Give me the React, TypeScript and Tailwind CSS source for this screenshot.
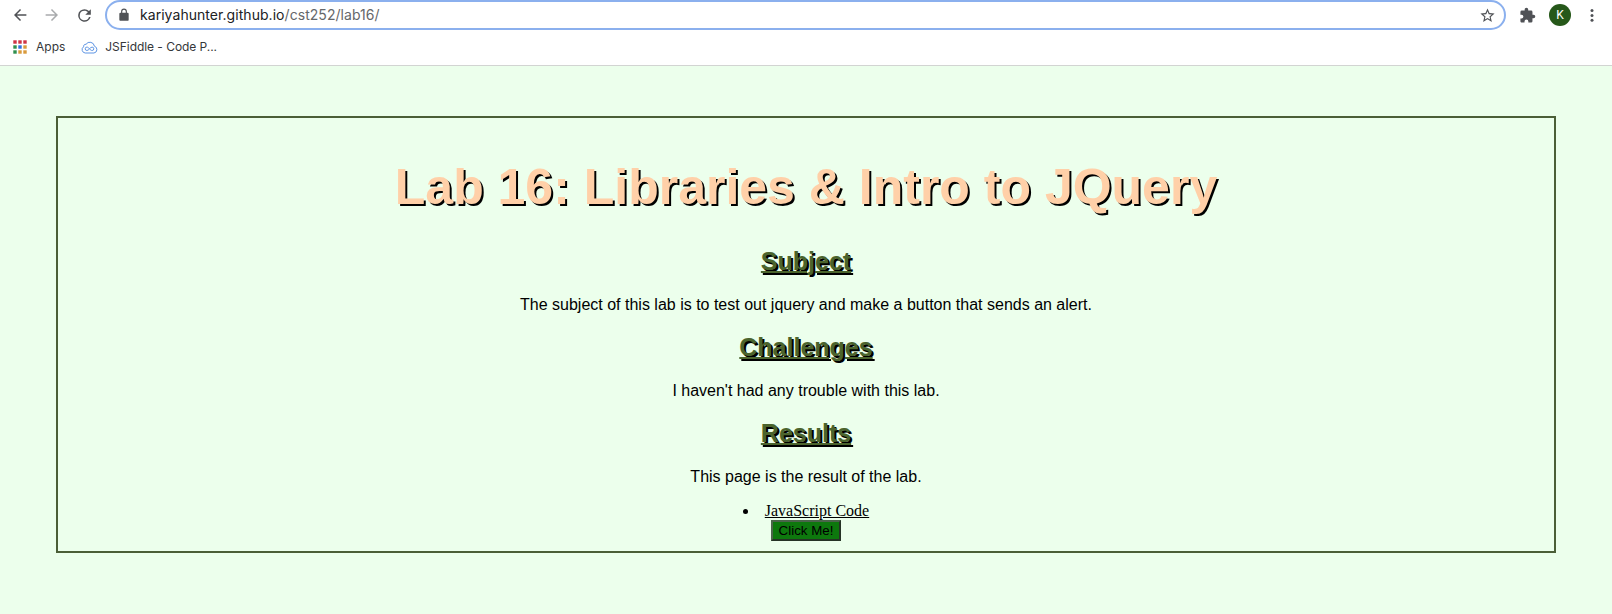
import React from "react";

const sections = [
  { title: "Subject", text: "The subject of this lab is to test out jquery and make a button that sends an alert." },
  { title: "Challenges", text: "I haven't had any trouble with this lab." },
  { title: "Results", text: "This page is the result of the lab." },
];

const appDots = [
  "fill-[#cf3344]", "fill-[#cf3344]", "fill-[#cf3344]",
  "fill-[#2f8f4e]", "fill-[#2f6fde]", "fill-[#d99a3c]",
  "fill-[#2f8f4e]", "fill-[#d99a3c]", "fill-[#d99a3c]",
];

function Toolbar() {
  return (
    <div className="flex h-[30px] items-center">
      <svg className="ml-[11px] size-[18px] shrink-0 fill-[#505256]" viewBox="0 0 24 24">
        <path d="M20.5 11H7.83l5.59-5.59L12 4l-8 8 8 8 1.41-1.41L7.83 13H20.5v-2z" />
      </svg>
      <svg className="ml-[14px] size-[18px] shrink-0 fill-[#a9abad]" viewBox="0 0 24 24">
        <path d="M12 4l-1.41 1.41L16.17 11H3.5v2h12.67l-5.58 5.59L12 20l8-8z" />
      </svg>
      <svg className="ml-[14px] size-[19px] shrink-0 fill-[#505256]" viewBox="0 0 24 24">
        <path d="M17.65 6.35A7.96 7.96 0 0 0 12 4a8 8 0 1 0 7.73 10h-2.08A6 6 0 1 1 12 6c1.66 0 3.14.69 4.22 1.78L13 11h7V4l-2.35 2.35z" />
      </svg>
      <div className="ml-[11px] flex h-[30px] w-[1401px] shrink-0 items-center rounded-full border-2 border-[#8bb0ee] bg-white">
        <svg className="ml-[10px] size-[14px] fill-[#505256]" viewBox="0 0 24 24">
          <path d="M18 8h-1V6A5 5 0 0 0 7 6v2H6a2 2 0 0 0-2 2v10c0 1.1.9 2 2 2h12a2 2 0 0 0 2-2V10a2 2 0 0 0-2-2zM9 6a3 3 0 0 1 6 0v2H9z" />
        </svg>
        <span className="ml-[9px] font-['Inter',sans-serif] text-[14px] leading-[20px] tracking-[0.05px] whitespace-nowrap text-[#202124]">
          kariyahunter.github.io<span className="text-[#65676a]">/cst252/lab16/</span>
        </span>
        <svg className="mr-[8px] ml-auto size-[17px] fill-[#505256]" viewBox="0 0 24 24">
          <path d="M22 9.24l-7.19-.62L12 2 9.19 8.63 2 9.24l5.46 4.73L5.82 21 12 17.27 18.18 21l-1.63-7.03L22 9.24zM12 15.4l-3.76 2.27 1-4.28-3.32-2.88 4.38-.38L12 6.1l1.71 4.04 4.38.38-3.32 2.88 1 4.28L12 15.4z" />
        </svg>
      </div>
      <svg className="ml-[13px] size-[17px] shrink-0 fill-[#505256]" viewBox="0 0 24 24">
        <path d="M20.5 11H19V7a2 2 0 0 0-2-2h-4V3.5a2.5 2.5 0 0 0-5 0V5H4a2 2 0 0 0-2 2v3.8h1.5a2.7 2.7 0 0 1 0 5.4H2V20c0 1.1.9 2 2 2h3.8v-1.5a2.7 2.7 0 0 1 5.4 0V22H17a2 2 0 0 0 2-2v-4h1.5a2.5 2.5 0 0 0 0-5z" />
      </svg>
      <div className="ml-[13px] flex size-[22px] shrink-0 items-center justify-center rounded-full bg-[#26581a] font-['Roboto',sans-serif] text-[12px] text-white">K</div>
      <svg className="ml-[12px] size-[18px] shrink-0 fill-[#505256]" viewBox="0 0 24 24">
        <circle cx="12" cy="6" r="2" />
        <circle cx="12" cy="12.5" r="2" />
        <circle cx="12" cy="19" r="2" />
      </svg>
    </div>
  );
}

function Bookmarks() {
  return (
    <div className="flex h-[34px] items-center font-['Inter',sans-serif] text-[12px] text-[#35373a]">
      <svg className="ml-[13px] size-[14px] shrink-0" viewBox="0 0 14 14">
        {appDots.map((color, i) => (
          <rect key={i} className={color} x={(i % 3) * 5 + 0.3} y={Math.floor(i / 3) * 5 + 0.3} width="3.4" height="3.4" />
        ))}
      </svg>
      <span className="ml-[9px]">Apps</span>
      <svg className="mt-px ml-[16px] h-[13px] w-[17px] shrink-0 fill-none stroke-[#5e95e4]" viewBox="0 0 17 13">
        <path d="M4.2 12A3.4 3.4 0 0 1 2.6 5.8 2.1 2.1 0 0 1 5 3.3 4.6 4.6 0 0 1 13.4 5.2 3.5 3.5 0 0 1 13 12z" />
        <path d="M8.5 7.8C7.5 6.6 6.8 6.1 5.9 6.1a1.7 1.7 0 0 0 0 3.4c1.9 0 3.3-3.4 5.2-3.4a1.7 1.7 0 0 1 0 3.4c-.9 0-1.6-.5-2.6-1.7z" />
      </svg>
      <span className="ml-[7px] tracking-[-0.05px]">JSFiddle - Code P...</span>
    </div>
  );
}

export default function App() {
  return (
    <div className="flex h-[614px] w-[1612px] flex-col overflow-hidden bg-[#ecffec]">
      <header className="h-[66px] shrink-0 border-b border-[#d2d4d2] bg-white">
        <Toolbar />
        <Bookmarks />
      </header>
      <main className="mx-[56px] mt-[50px] flex h-[437px] flex-col items-center border-2 border-[#4b5f37] font-['Liberation_Sans',Arial,sans-serif] text-black">
        <h1 className="mt-[40px] h-[58px] text-[50px] leading-[58px] font-bold whitespace-nowrap text-[#ffd0a8] [text-shadow:2px_2px_#000]">
          Lab 16: Libraries &amp; Intro to JQuery
        </h1>
        <div className="mt-[31px] flex flex-col items-center">
          {sections.map((s) => (
            <section key={s.title} className="flex h-[86px] flex-col items-center">
              <h2 className="h-[28px] text-[25px] leading-[28px] font-bold text-[#4b642d] underline decoration-2 [text-shadow:2px_2px_#000]">{s.title}</h2>
              <p className="mt-[21px] text-[16px] leading-[18px] whitespace-nowrap">{s.text}</p>
            </section>
          ))}
        </div>
        <ul className="-mt-[3px] font-['Liberation_Serif','Times_New_Roman',serif] text-[16px] leading-[18px]">
          <li className="flex items-center">
            <span className="mr-[17px] size-[5px] rounded-full bg-black" />
            <a className="underline">JavaScript Code</a>
          </li>
        </ul>
        <button className="h-[21px] w-[70px] border-2 border-t-[#4b654b] border-r-[#263326] border-b-[#263326] border-l-[#4b654b] bg-[#0d780d] text-[13.33px] leading-[17px] whitespace-nowrap text-black">
          Click Me!
        </button>
      </main>
    </div>
  );
}
